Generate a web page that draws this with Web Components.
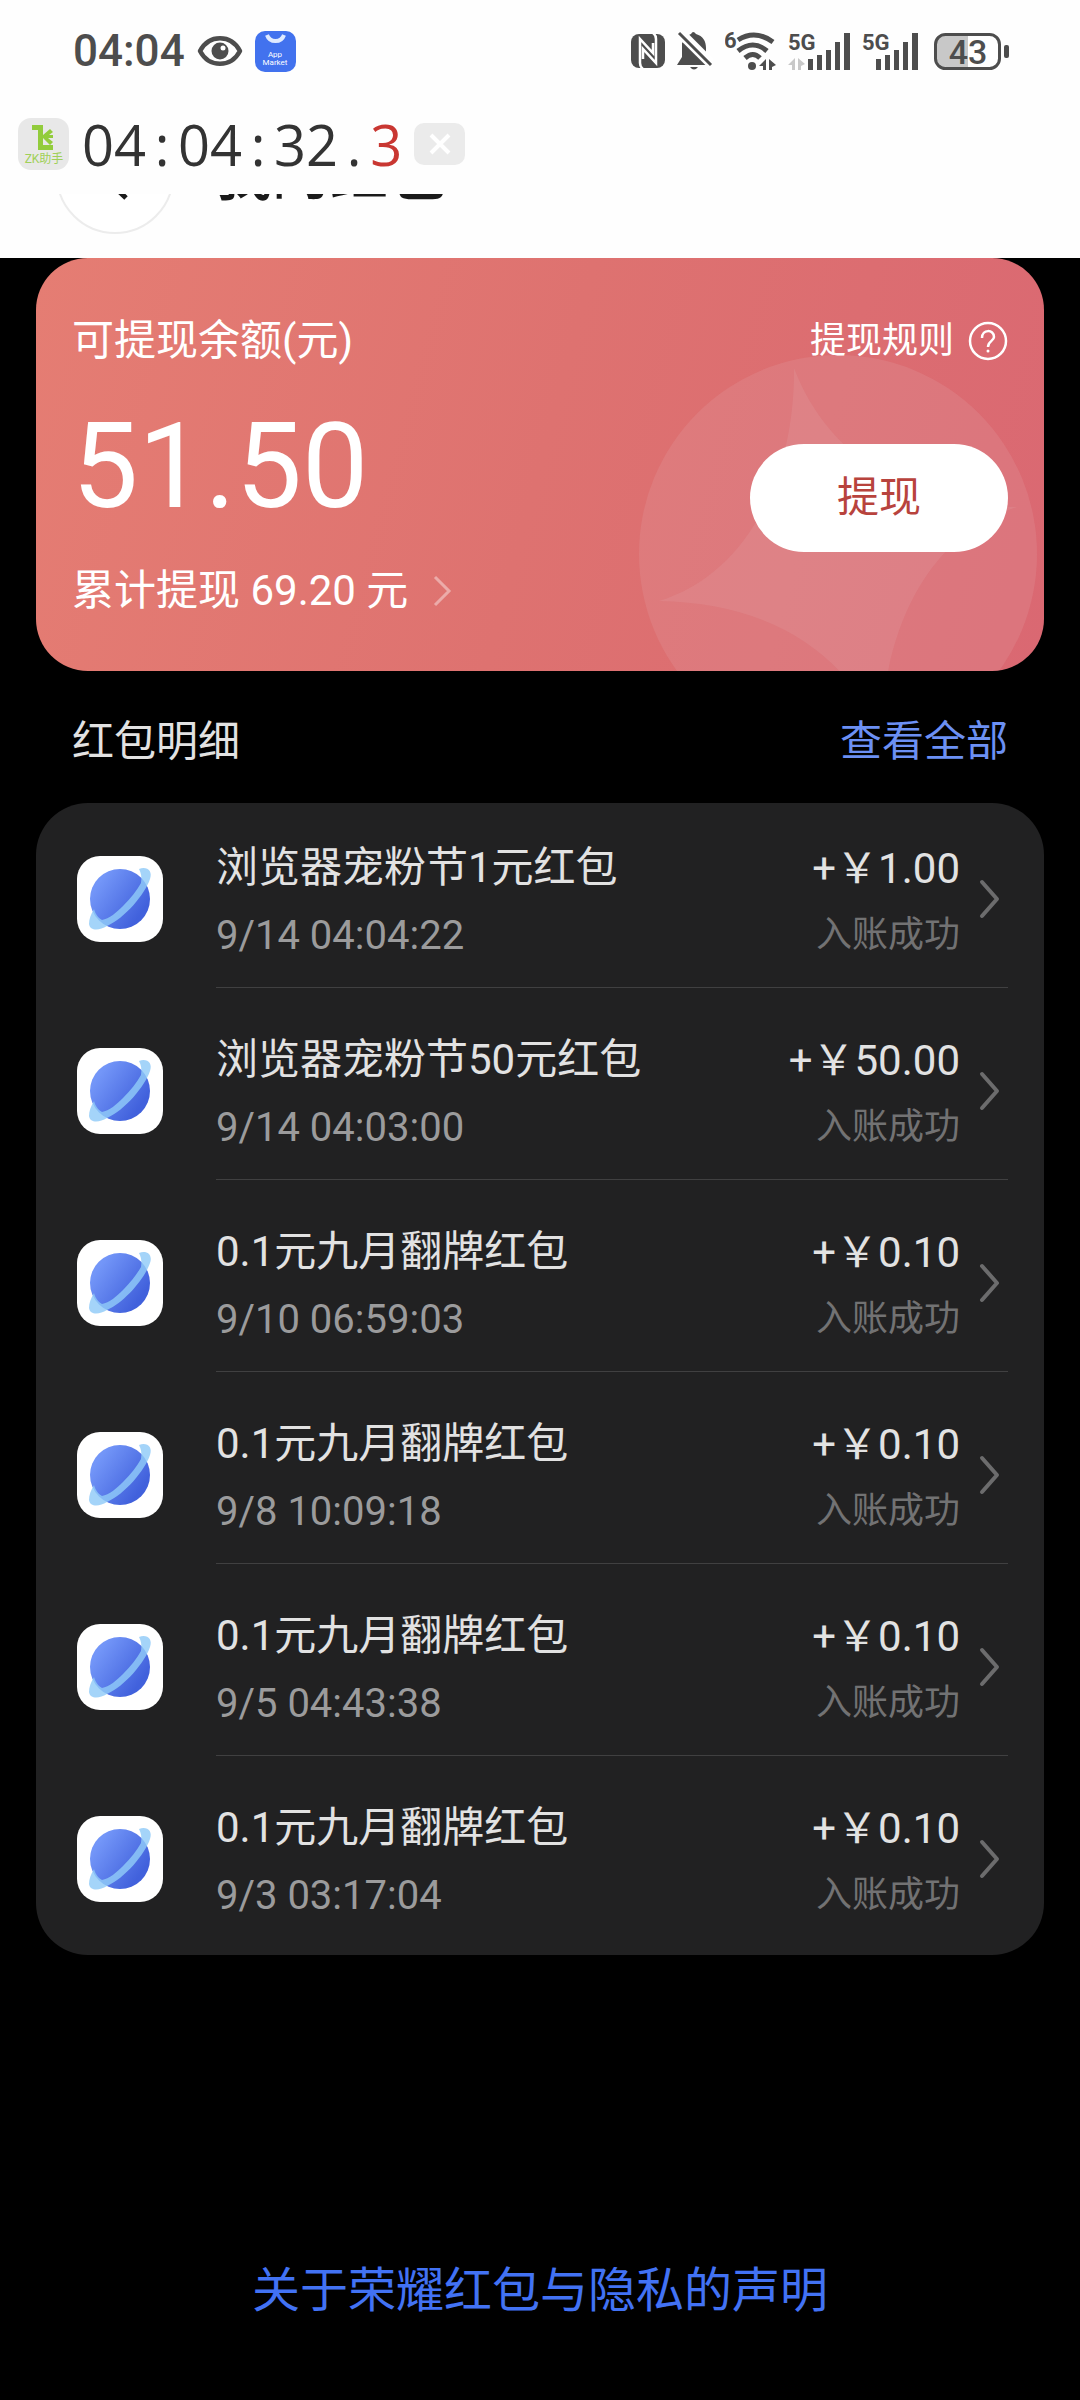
<!DOCTYPE html>
<html lang="zh-CN">
<head>
<meta charset="utf-8">
<meta name="viewport" content="width=device-width, initial-scale=1">
<title>我的红包</title>
<style>
    body {
        margin: 0;
        background: #000;
        font-family: Roboto, "Noto Sans CJK SC", sans-serif;
    }
</style>
</head>
<body>
<wallet-page></wallet-page>

<script>
class StatusBar extends HTMLElement {
    connectedCallback() {
        this.attachShadow({ mode: 'open' });
        this.shadowRoot.innerHTML = `
            <style>
                :host {
                    display: flex;
                    align-items: center;
                    justify-content: space-between;
                    height: 102px;
                    padding: 0 71px 0 73px;
                    color: #4d4d4d;
                }

                .side {
                    display: flex;
                    align-items: center;
                    gap: 12px;
                }

                .time {
                    font-size: 44px;
                    font-weight: 500;
                    line-height: 52px;
                }

                svg {
                    display: block;
                    fill: currentColor;
                    font-weight: 700;
                }
            </style>

            <div class="side">
                <span class="time">04:04</span>
                <svg width="46" height="32" viewBox="0 0 46 32">
                    <path d="M3 16C12-1 34-1 43 16C34 33 12 33 3 16Z" fill="none" stroke="currentColor" stroke-width="4.5" stroke-linejoin="round"/>
                    <circle cx="23" cy="16" r="8.5"/>
                    <circle cx="26" cy="13" r="2.5" fill="#fff"/>
                </svg>
                <svg width="41" height="41" viewBox="0 0 41 41">
                    <rect width="41" height="41" rx="10" fill="#4272ee"/>
                    <path d="M12 4a9 9 0 0 0 17 0" fill="none" stroke="#dfeaff" stroke-width="4"/>
                    <text x="20" y="26" fill="#fff" font-size="8" font-weight="400" text-anchor="middle">App</text>
                    <text x="20" y="34" fill="#fff" font-size="8" font-weight="400" text-anchor="middle">Market</text>
                </svg>
            </div>

            <div class="side">
                <svg width="34" height="36" viewBox="0 0 34 36">
                    <rect y="1" width="34" height="34" rx="8"/>
                    <path d="M12 36Q9 34 9 30V6L22 20V10M22 0Q25 2 25 6V30L12 16V26" fill="none" stroke="#fff" stroke-width="2.5"/>
                </svg>
                <svg width="36" height="40" viewBox="0 0 36 40">
                    <path d="M11 5Q13 3 14 3Q16-1 19 3C26 5 29 10 29 17V24L33 34H0L5 26V12ZM13 36H21Q17 41 13 36Z"/>
                    <path d="M5 0L40 35" stroke="#fff" stroke-width="5"/>
                    <path d="M2 2L35 35" stroke="#fff" stroke-width="8"/>
                    <path d="M2 2L34 34" stroke="currentColor" stroke-width="3"/>
                </svg>
                <svg width="51" height="40" viewBox="0 0 51 40">
                    <text x="-1" y="17" font-size="22">6</text>
                    <path d="M13 9Q30-2 48 11M13 20Q28 8 42 20M20 27Q28 20 35 27" fill="none" stroke="currentColor" stroke-width="5"/>
                    <circle cx="27" cy="35" r="4"/>
                    <path d="M41 28V39H38V35H34ZM44 28L51 34L47 36V39H44Z"/>
                </svg>
                <svg width="62" height="40" viewBox="0 0 62 40">
                    <text x="0" y="19" font-size="22">5G</text>
                    <path d="M7 27V39H4V34H0ZM10 27L17 33L13 35V39H10Z" fill="#c8c8c8"/>
                    <path d="M20 28h5v11h-5zM29 24h5v15h-5zM38 19h5v20h-5zM47 11h5v28h-5zM56 2h6v37h-6z"/>
                </svg>
                <svg width="56" height="40" viewBox="0 0 56 40">
                    <text x="0" y="19" font-size="22">5G</text>
                    <path d="M14 28h5v11h-5zM23 24h5v15h-5zM32 19h5v20h-5zM41 11h5v28h-5zM50 2h6v37h-6z"/>
                </svg>
                <svg width="79" height="40" viewBox="0 0 79 40">
                    <path d="M38 4V36H16a10 10 0 0 1-10-10V14a10 10 0 0 1 10-10Z" fill="#c8c8c8"/>
                    <rect x="5.5" y="3.5" width="64" height="34" rx="10" fill="none" stroke="currentColor" stroke-width="3"/>
                    <rect x="74" y="14" width="5" height="13" rx="2"/>
                    <text x="38" y="33" font-size="34" font-weight="500" text-anchor="middle">43</text>
                </svg>
            </div>
        `;
    }
}

// Floating stopwatch drawn over the app
class ClockOverlay extends HTMLElement {
    connectedCallback() {
        this.attachShadow({ mode: 'open' });
        this.shadowRoot.innerHTML = `
            <style>
                :host {
                    display: flex;
                    align-items: center;
                    padding: 10px 18px 18px;
                }

                .logo {
                    display: block;
                }

                .clock {
                    display: flex;
                    margin: 0 12px 0 13px;
                    font: 56px/64px "Open Sans", sans-serif;
                    color: #333;
                }

                .mark {
                    width: 32px;
                    text-align: center;
                }

                .tenth {
                    color: #c93732;
                }

                button {
                    display: grid;
                    place-items: center;
                    width: 51px;
                    height: 42px;
                    padding: 0;
                    border: 0;
                    border-radius: 10px;
                    background: #ebebeb;
                }
            </style>

            <svg class="logo" width="51" height="52" viewBox="0 0 51 52">
                <rect width="51" height="52" rx="13" fill="#e8e8e8"/>
                <path d="M14 7H25V27H35V32H20V12H14ZM25 17L32 11L35 14L31 17H35V20L30 20L35 24L32 27L25 20Z" fill="#92cc3c"/>
                <text x="26" y="45" fill="#a0d058" font-size="12" text-anchor="middle">ZK助手</text>
            </svg>
            <div class="clock">
                <span>04</span><span class="mark">:</span><span>04</span><span class="mark">:</span><span>32</span><span class="mark">.</span><span class="tenth">3</span>
            </div>
            <button aria-label="关闭">
                <svg width="24" height="24" viewBox="0 0 24 24">
                    <path d="M3 3L21 21M21 3L3 21" stroke="#fff" stroke-width="4"/>
                </svg>
            </button>
        `;
    }
}

// Title bar, scrolled partly under the bars above it
class TitleBar extends HTMLElement {
    connectedCallback() {
        this.attachShadow({ mode: 'open' });
        this.shadowRoot.innerHTML = `
            <style>
                :host {
                    display: flex;
                    align-items: flex-end;
                    gap: 40px;
                    height: 64px;
                    box-sizing: border-box;
                    padding: 0 56px 24px;
                    overflow: hidden;
                }

                button {
                    flex: none;
                    display: grid;
                    place-items: center;
                    width: 118px;
                    height: 118px;
                    padding: 0;
                    border: 2px solid #ececec;
                    border-radius: 50%;
                    background: #fff;
                }

                h1 {
                    margin: 0;
                    font-size: 58px;
                    font-weight: 500;
                    line-height: 118px;
                    color: #1a1a1a;
                }
            </style>

            <button aria-label="返回">
                <svg width="54" height="54" viewBox="0 0 54 54">
                    <path d="M38 4L14 27L38 50" fill="none" stroke="#1a1a1a" stroke-width="5"/>
                </svg>
            </button>
            <h1><slot></slot></h1>
        `;
    }
}

class BalanceCard extends HTMLElement {
    connectedCallback() {
        const amount = this.getAttribute('amount');
        const total = this.getAttribute('total');

        this.attachShadow({ mode: 'open' });
        this.shadowRoot.innerHTML = `
            <style>
                :host {
                    display: flex;
                    justify-content: space-between;
                    position: relative;
                    box-sizing: border-box;
                    min-height: 413px;
                    padding: 53px 36px 50px;
                    border-radius: 52px;
                    overflow: hidden;
                    color: #fff;
                    font-size: 42px;
                    line-height: 60px;
                    background: linear-gradient(105deg, #e57d73, #de7270 50%, #da6872);
                }

                .planet {
                    position: absolute;
                    right: 7px;
                    top: 97px;
                    fill: #e2a0a4;
                    fill-opacity: 0.24;
                }

                .balance, .actions {
                    position: relative;
                    display: flex;
                    flex-direction: column;
                }

                .actions {
                    align-items: flex-end;
                    gap: 73px;
                }

                .amount {
                    margin: 24px 0 22px;
                    font-size: 118px;
                    line-height: 144px;
                }

                a {
                    display: flex;
                    align-items: center;
                    color: inherit;
                    text-decoration: none;
                }

                .total {
                    gap: 24px;
                }

                .rules {
                    gap: 14px;
                    font-size: 36px;
                }

                button {
                    width: 258px;
                    height: 108px;
                    border: 0;
                    border-radius: 54px;
                    background: #fff;
                    color: #b8433d;
                    font: inherit;
                }
            </style>

            <svg class="planet" width="398" height="398" viewBox="0 0 398 398">
                <circle cx="199" cy="199" r="199"/>
                <path d="M155 13C186 95 261 150 378 152C292 178 242 273 243 385C212 303 137 248 20 246C106 220 156 125 155 13Z"/>
            </svg>
            <div class="balance">
                <span>可提现余额(元)</span>
                <span class="amount">${amount}</span>
                <a class="total" href="#total">累计提现 ${total} 元
                    <svg width="20" height="34" viewBox="0 0 20 34">
                        <path d="M3 3L17 17L3 31" fill="none" stroke="#fff" stroke-opacity="0.4" stroke-width="3"/>
                    </svg>
                </a>
            </div>
            <div class="actions">
                <a class="rules" href="#rules">提现规则
                    <svg width="40" height="40" viewBox="0 0 40 40" fill="none" stroke="#fff">
                        <circle cx="20" cy="20" r="18" stroke-width="2.5"/>
                        <path d="M14 17C14 8 26 8 26 16C26 20 20 20 20 26" stroke-width="2.5"/>
                        <circle cx="20" cy="30" r="1.5" fill="#fff" stroke="none"/>
                    </svg>
                </a>
                <button>提现</button>
            </div>
        `;
    }
}

class SectionHead extends HTMLElement {
    connectedCallback() {
        this.attachShadow({ mode: 'open' });
        this.shadowRoot.innerHTML = `
            <style>
                :host {
                    display: flex;
                    align-items: center;
                    justify-content: space-between;
                    height: 132px;
                    padding: 0 36px;
                    font-size: 42px;
                    color: #e2e2e2;
                }

                h2 {
                    margin: 0;
                    font-size: inherit;
                    font-weight: 400;
                }

                a {
                    color: #6c90f4;
                    text-decoration: none;
                }
            </style>

            <h2><slot></slot></h2>
            <a href="#all">查看全部</a>
        `;
    }
}

class PacketRow extends HTMLElement {
    connectedCallback() {
        const date = this.getAttribute('date');
        const amount = this.getAttribute('amount');

        this.attachShadow({ mode: 'open' });
        this.shadowRoot.innerHTML = `
            <style>
                :host {
                    display: block;
                }

                a {
                    display: flex;
                    align-items: center;
                    gap: 53px;
                    height: 176px;
                    padding: 0 36px 0 41px;
                    color: #e2e2e2;
                    font-size: 42px;
                    line-height: 60px;
                    text-decoration: none;
                }

                .icon {
                    flex: none;
                }

                .body {
                    flex: 1;
                    display: flex;
                    align-items: center;
                    gap: 18px;
                    box-sizing: border-box;
                    height: 178px;
                    border-bottom: 1px solid #404041;
                }

                :host(:last-of-type) .body {
                    border-color: transparent;
                }

                .text, .money {
                    display: flex;
                    flex-direction: column;
                    gap: 8px;
                    padding-top: 6px;
                }

                .text {
                    flex: 1;
                }

                .date {
                    font-size: 40px;
                    color: #9b9b9c;
                }

                .money {
                    text-align: right;
                    gap: 6px;
                }

                .state {
                    font-size: 36px;
                    color: #727273;
                }

                .arrow {
                    margin-right: 8px;
                }
            </style>

            <a href="#detail">
                <svg class="icon" width="86" height="86" viewBox="0 0 86 86">
                    <defs>
                        <linearGradient id="globe" x1="0.1" y1="0.3" x2="0.8" y2="0.8">
                            <stop offset="0" stop-color="#7396f8"/>
                            <stop offset="1" stop-color="#4161dc"/>
                        </linearGradient>
                    </defs>
                    <rect width="86" height="86" rx="23" fill="#fff"/>
                    <circle cx="43" cy="43" r="30" fill="url(#globe)"/>
                    <path d="M62 13C70 10 76 15 73 23C68 38 48 62 30 70C22 75 13 75 12 68C12 63 14 58 17 53C18 57 21 62 25 64C32 63 40 56 46 50C54 42 60 34 64 27C65 21 64 17 62 13Z" fill="#90cbf8" fill-opacity="0.82"/>
                </svg>
                <div class="body">
                    <div class="text">
                        <span><slot></slot></span>
                        <span class="date">${date}</span>
                    </div>
                    <div class="money">
                        <span>+￥${amount}</span>
                        <span class="state">入账成功</span>
                    </div>
                    <svg class="arrow" width="22" height="40" viewBox="0 0 22 40">
                        <path d="M4 3L19 20L4 37" fill="none" stroke="#6c6c6d" stroke-width="4" stroke-linecap="round" stroke-linejoin="round"/>
                    </svg>
                </div>
            </a>
        `;
    }
}

class PacketList extends HTMLElement {
    connectedCallback() {
        this.attachShadow({ mode: 'open' });
        this.shadowRoot.innerHTML = `
            <style>
                :host {
                    display: flex;
                    flex-direction: column;
                    gap: 16px;
                    padding: 8px 0;
                    border-radius: 52px;
                    background: #212122;
                }
            </style>
            <slot></slot>
        `;
    }
}

class WalletPage extends HTMLElement {
    connectedCallback() {
        this.attachShadow({ mode: 'open' });
        this.shadowRoot.innerHTML = `
            <style>
                :host {
                    display: flex;
                    flex-direction: column;
                    min-height: 100vh;
                }

                header {
                    background: #fefefe;
                }

                main {
                    padding: 0 36px;
                }

                footer {
                    margin-top: auto;
                    padding: 40px 36px 74px;
                    text-align: center;
                    font-size: 48px;
                    line-height: 70px;
                }

                footer a {
                    color: #4272f4;
                    text-decoration: none;
                }
            </style>

            <header>
                <status-bar></status-bar>
                <clock-overlay></clock-overlay>
                <title-bar>我的红包</title-bar>
            </header>
            <main>
                <balance-card amount="51.50" total="69.20"></balance-card>
                <section-head>红包明细</section-head>
                <packet-list>
                    <packet-row date="9/14 04:04:22" amount="1.00">浏览器宠粉节1元红包</packet-row>
                    <packet-row date="9/14 04:03:00" amount="50.00">浏览器宠粉节50元红包</packet-row>
                    <packet-row date="9/10 06:59:03" amount="0.10">0.1元九月翻牌红包</packet-row>
                    <packet-row date="9/8 10:09:18" amount="0.10">0.1元九月翻牌红包</packet-row>
                    <packet-row date="9/5 04:43:38" amount="0.10">0.1元九月翻牌红包</packet-row>
                    <packet-row date="9/3 03:17:04" amount="0.10">0.1元九月翻牌红包</packet-row>
                </packet-list>
            </main>
            <footer>
                <a href="#privacy">关于荣耀红包与隐私的声明</a>
            </footer>
        `;
    }
}

customElements.define('status-bar', StatusBar);
customElements.define('clock-overlay', ClockOverlay);
customElements.define('title-bar', TitleBar);
customElements.define('balance-card', BalanceCard);
customElements.define('section-head', SectionHead);
customElements.define('packet-row', PacketRow);
customElements.define('packet-list', PacketList);
customElements.define('wallet-page', WalletPage);
</script>
</body>
</html>
